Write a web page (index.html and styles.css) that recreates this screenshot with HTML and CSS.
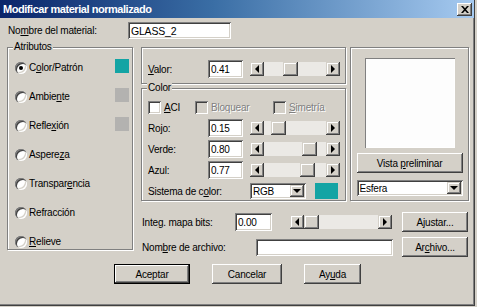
FILE: index.html
```html
<!DOCTYPE html>
<html lang="es">

<head>
  <meta charset="UTF-8">
  <meta name="viewport" content="width=device-width, initial-scale=1.0">
  <title>Modificar material normalizado</title>
  <link rel="stylesheet" href="styles.css">
</head>

<body>
  <div class="dialog">
    <div class="titlebar">
      <span class="title">Modificar material normalizado</span>
      <span class="close-btn">
        <svg width="8" height="7" viewBox="0 0 8 7">
          <path d="M0 0h2l2 2.3L6 0h2L5 3.5 8 7H6L4 4.7 2 7H0l3-3.5z" fill="#000" />
        </svg>
      </span>
    </div>

    <div class="name-row">
      <span class="name-label">No<u>m</u>bre del material:</span>
      <span class="field name-field">GLASS_2</span>
    </div>

    <div class="main">
      <!-- left: attributes -->
      <div class="group attrs">
        <span class="group-label">Atributos</span>
        <div class="option"><span class="radio checked"></span><span>C<u>o</u>lor/Patrón</span><span class="swatch teal"></span></div>
        <div class="option"><span class="radio"></span><span>Ambie<u>n</u>te</span><span class="swatch grey"></span></div>
        <div class="option"><span class="radio"></span><span>Refle<u>x</u>ión</span><span class="swatch grey"></span></div>
        <div class="option"><span class="radio"></span><span>Aspere<u>z</u>a</span></div>
        <div class="option"><span class="radio"></span><span>Transpar<u>e</u>ncia</span></div>
        <div class="option"><span class="radio"></span><span>Refracción</span></div>
        <div class="option"><span class="radio"></span><span><u>R</u>elieve</span></div>
      </div>

      <!-- middle: value -->
      <div class="group value-group">
        <div class="field-row">
          <span><u>V</u>alor:</span>
          <span class="field">0.41</span>
          <div class="scroll"><span class="arrow left"></span><span class="track"><span class="thumb" style="margin-left:19px"></span></span><span class="arrow right"></span></div>
        </div>
      </div>

      <!-- middle: colour -->
      <div class="group color-group">
        <span class="group-label">Color</span>
        <div class="checks">
          <div class="check-item aci"><span class="checkbox"></span><span><u>A</u>CI</span></div>
          <div class="check-item lock"><span class="checkbox disabled"></span><span class="disabled-text">Bloquear</span></div>
          <div class="check-item"><span class="checkbox disabled"></span><span class="disabled-text"><u>S</u>imetría</span></div>
        </div>
        <div class="rows">
          <div class="field-row">
            <span>Rojo:</span>
            <span class="field">0.15</span>
            <div class="scroll"><span class="arrow left"></span><span class="track"><span class="thumb" style="margin-left:7px"></span></span><span class="arrow right"></span></div>
          </div>
          <div class="field-row">
            <span>Verde:</span>
            <span class="field">0.80</span>
            <div class="scroll"><span class="arrow left"></span><span class="track"><span class="thumb" style="margin-left:38px"></span></span><span class="arrow right"></span></div>
          </div>
          <div class="field-row">
            <span>Azul:</span>
            <span class="field">0.77</span>
            <div class="scroll"><span class="arrow left"></span><span class="track"><span class="thumb" style="margin-left:36px"></span></span><span class="arrow right"></span></div>
          </div>
          <div class="field-row">
            <span class="wide-label">Sistema de c<u>o</u>lor:</span>
            <div class="system">
              <div class="field select rgb"><span>RGB</span><span class="drop"></span></div>
              <span class="swatch big teal"></span>
            </div>
          </div>
        </div>
      </div>

      <!-- right: preview -->
      <div class="group preview-group">
        <div class="preview"></div>
        <div class="button preview-btn"><span>Vista <u>p</u>reliminar</span></div>
        <div class="field select shape"><span>Esfera</span><span class="drop"></span></div>
      </div>

      <!-- bottom: bitmap -->
      <div class="bitmap">
        <div class="bitmap-row">
          <span class="bm-label">Inte<u>g</u>. mapa bits:</span>
          <span class="field bm-value">0.00</span>
          <div class="scroll bm-scroll"><span class="arrow left"></span><span class="track"><span class="thumb"></span></span><span class="arrow right"></span></div>
          <div class="button side-btn"><span>A<u>j</u>ustar...</span></div>
        </div>
        <div class="bitmap-row file-row">
          <span class="file-label">Nom<u>b</u>re de archivo:</span>
          <span class="field file-field"></span>
          <div class="button side-btn file-btn"><span>Ar<u>c</u>hivo...</span></div>
        </div>
      </div>
    </div>

    <div class="actions">
      <div class="button default ok"><span>Aceptar</span></div>
      <div class="button cancel"><span>Cancelar</span></div>
      <div class="button help"><span>Ay<u>u</u>da</span></div>
    </div>
  </div>
</body>

</html>
```

FILE: styles.css
```css
* {
  box-sizing: border-box;
}

body {
  margin: 0;
  background-color: #d4d0c8;
  font-family: 'Liberation Sans', Arial, sans-serif;
  font-size: 10px;
  letter-spacing: -0.2px;
  color: #000;
}

u {
  text-underline-offset: 1px;
}

.dialog {
  width: 475px;
  height: 306px;
  background-color: #d4d0c8;
  border-right: 1px solid #404040;
  border-bottom: 1px solid #404040;
  box-shadow: inset -1px -1px 0 #808080;
}

/* title bar */
.titlebar {
  height: 18px;
  display: flex;
  align-items: center;
  justify-content: space-between;
  padding: 0 2px 0 3px;
  background: linear-gradient(to right, #0a246a, #3a6ea5 45%, #a6caf0);
}

.title {
  color: #fff;
  font-weight: bold;
  font-size: 11px;
  letter-spacing: -0.45px;
}

.close-btn {
  width: 15px;
  height: 13px;
  display: flex;
  align-items: center;
  justify-content: center;
  background-color: #d4d0c8;
  box-shadow: inset -1px -1px #404040, inset 1px 1px #fff, inset -2px -2px #808080;
}

/* shared bits */
.field {
  display: flex;
  align-items: center;
  height: 18px;
  padding: 0 3px;
  background-color: #fff;
  box-shadow: inset 1px 1px #808080, inset -1px -1px #fff, inset 2px 2px #404040, inset -2px -2px #d4d0c8;
  white-space: nowrap;
}

.button {
  display: flex;
  align-items: center;
  justify-content: center;
  height: 20px;
  background-color: #d4d0c8;
  box-shadow: inset -1px -1px #404040, inset 1px 1px #fff, inset -2px -2px #808080, inset 2px 2px #d4d0c8;
  white-space: nowrap;
}

.button.default {
  border: 1px solid #000;
}

.group {
  position: relative;
  border: 1px solid #808080;
  box-shadow: inset 1px 1px 0 #fff, 1px 1px 0 #fff;
}

.group-label {
  position: absolute;
  top: -7px;
  left: 5px;
  padding: 0 1px;
  line-height: 12px;
  background-color: #d4d0c8;
}

.swatch {
  width: 14px;
  height: 14px;
}

.swatch.teal {
  background-color: #13a4a4;
}

.swatch.grey {
  background-color: #b3b2b0;
}

/* name row */
.name-row {
  display: flex;
  align-items: center;
  height: 17px;
  margin-top: 4px;
  padding-left: 8px;
}

.name-label {
  width: 120px;
}

.name-field {
  width: 103px;
  height: 17px;
  font-size: 10.5px;
}

/* main grid */
.main {
  display: grid;
  grid-template-columns: 130px 205px 119px;
  grid-template-rows: 37px 113px 53px;
  column-gap: 4px;
  row-gap: 4px;
  margin: 8px 0 0 7px;
}

.attrs {
  grid-column: 1;
  grid-row: 1 / 4;
  align-self: start;
  height: 203px;
  margin-right: 4px;
  padding-top: 5px;
}

.option {
  display: flex;
  align-items: center;
  height: 29px;
  padding: 0 3px 0 7px;
}

.option .swatch {
  margin-left: auto;
  margin-top: -4px;
}

.radio {
  position: relative;
  width: 12px;
  height: 12px;
  margin-right: 2px;
  border-radius: 50%;
  background-color: #fff;
  box-shadow: inset 1px 1px #808080, inset 2px 2px #404040, inset -1px -1px #fff, inset -2px -2px #d4d0c8;
}

.radio.checked::after {
  content: '';
  position: absolute;
  left: 4px;
  top: 4px;
  width: 4px;
  height: 4px;
  border-radius: 50%;
  background-color: #000;
}

.value-group {
  grid-column: 2;
  grid-row: 1;
  padding: 12px 0 0 6px;
}

.field-row {
  display: grid;
  grid-template-columns: 53px 35px 90px;
  column-gap: 7px;
  align-items: center;
  height: 18px;
}

.scroll {
  display: flex;
  height: 14px;
  background-color: #ebe9e5;
}

.arrow {
  position: relative;
  width: 14px;
  height: 14px;
  background-color: #d4d0c8;
  box-shadow: inset -1px -1px #404040, inset 1px 1px #d4d0c8, inset -2px -2px #808080, inset 2px 2px #fff;
}

.arrow::after {
  content: '';
  position: absolute;
  top: 3px;
  left: 5px;
  border-top: 4px solid transparent;
  border-bottom: 4px solid transparent;
}

.arrow.left::after {
  border-right: 4px solid #000;
}

.arrow.right::after {
  border-left: 4px solid #000;
}

.track {
  flex: 1;
  display: flex;
}

.thumb {
  width: 15px;
  height: 14px;
  background-color: #d4d0c8;
  box-shadow: inset -1px -1px #404040, inset 1px 1px #d4d0c8, inset -2px -2px #808080, inset 2px 2px #fff;
}

/* colour group */
.color-group {
  grid-column: 2;
  grid-row: 2;
  padding: 12px 0 0 6px;
}

.checks {
  display: flex;
  align-items: center;
  height: 13px;
  margin-bottom: 5px;
}

.check-item {
  display: flex;
  align-items: center;
}

.check-item.aci {
  width: 47px;
}

.check-item.lock {
  width: 78px;
}

.checkbox {
  width: 13px;
  height: 13px;
  margin-right: 3px;
  background-color: #fff;
  box-shadow: inset 1px 1px #808080, inset -1px -1px #fff, inset 2px 2px #404040, inset -2px -2px #d4d0c8;
}

.checkbox.disabled {
  background-color: #d4d0c8;
}

.disabled-text {
  color: #808080;
  text-shadow: 1px 1px 0 #fff;
}

.rows {
  display: flex;
  flex-direction: column;
  gap: 3px;
}

.wide-label {
  grid-column: 1 / 3;
}

.system {
  display: flex;
  align-items: center;
}

.select {
  justify-content: space-between;
  height: 16px;
  padding: 2px 2px 2px 3px;
}

.drop {
  position: relative;
  width: 14px;
  height: 12px;
  background-color: #d4d0c8;
  box-shadow: inset -1px -1px #404040, inset 1px 1px #d4d0c8, inset -2px -2px #808080, inset 2px 2px #fff;
}

.drop::after {
  content: '';
  position: absolute;
  left: 3px;
  top: 4px;
  border-left: 4px solid transparent;
  border-right: 4px solid transparent;
  border-top: 4px solid #000;
}

.rgb {
  width: 56px;
}

.swatch.big {
  width: 23px;
  height: 16px;
  margin-left: 9px;
}

/* preview */
.preview-group {
  grid-column: 3;
  grid-row: 1 / 3;
  display: flex;
  flex-direction: column;
  align-items: center;
  padding-top: 10px;
}

.preview {
  width: 90px;
  height: 90px;
  background-color: #fdfdfd;
  box-shadow: inset 1px 1px #808080, inset -1px -1px #fff;
}

.preview-btn {
  width: 106px;
  margin-top: 5px;
}

.shape {
  width: 106px;
  margin-top: 7px;
}

/* bitmap rows */
.bitmap {
  grid-column: 2 / 4;
  grid-row: 3;
  padding: 7px 0 0 1px;
}

.bitmap-row {
  display: flex;
  align-items: center;
  height: 20px;
}

.bm-label {
  width: 93px;
}

.bm-value {
  width: 37px;
}

.bm-scroll {
  width: 102px;
  margin-left: 18px;
}

.side-btn {
  width: 66px;
  margin-left: 10px;
}

.file-row {
  margin-top: 5px;
}

.file-label {
  width: 114px;
}

.file-field {
  width: 137px;
  height: 17px;
}

.file-btn {
  margin-left: 9px;
}

/* dialog buttons */
.actions {
  display: flex;
  justify-content: center;
  gap: 22px;
  margin-top: 6px;
  padding-left: 1px;
}

.ok {
  width: 76px;
}

.cancel {
  width: 70px;
}

.help {
  width: 57px;
}
```
